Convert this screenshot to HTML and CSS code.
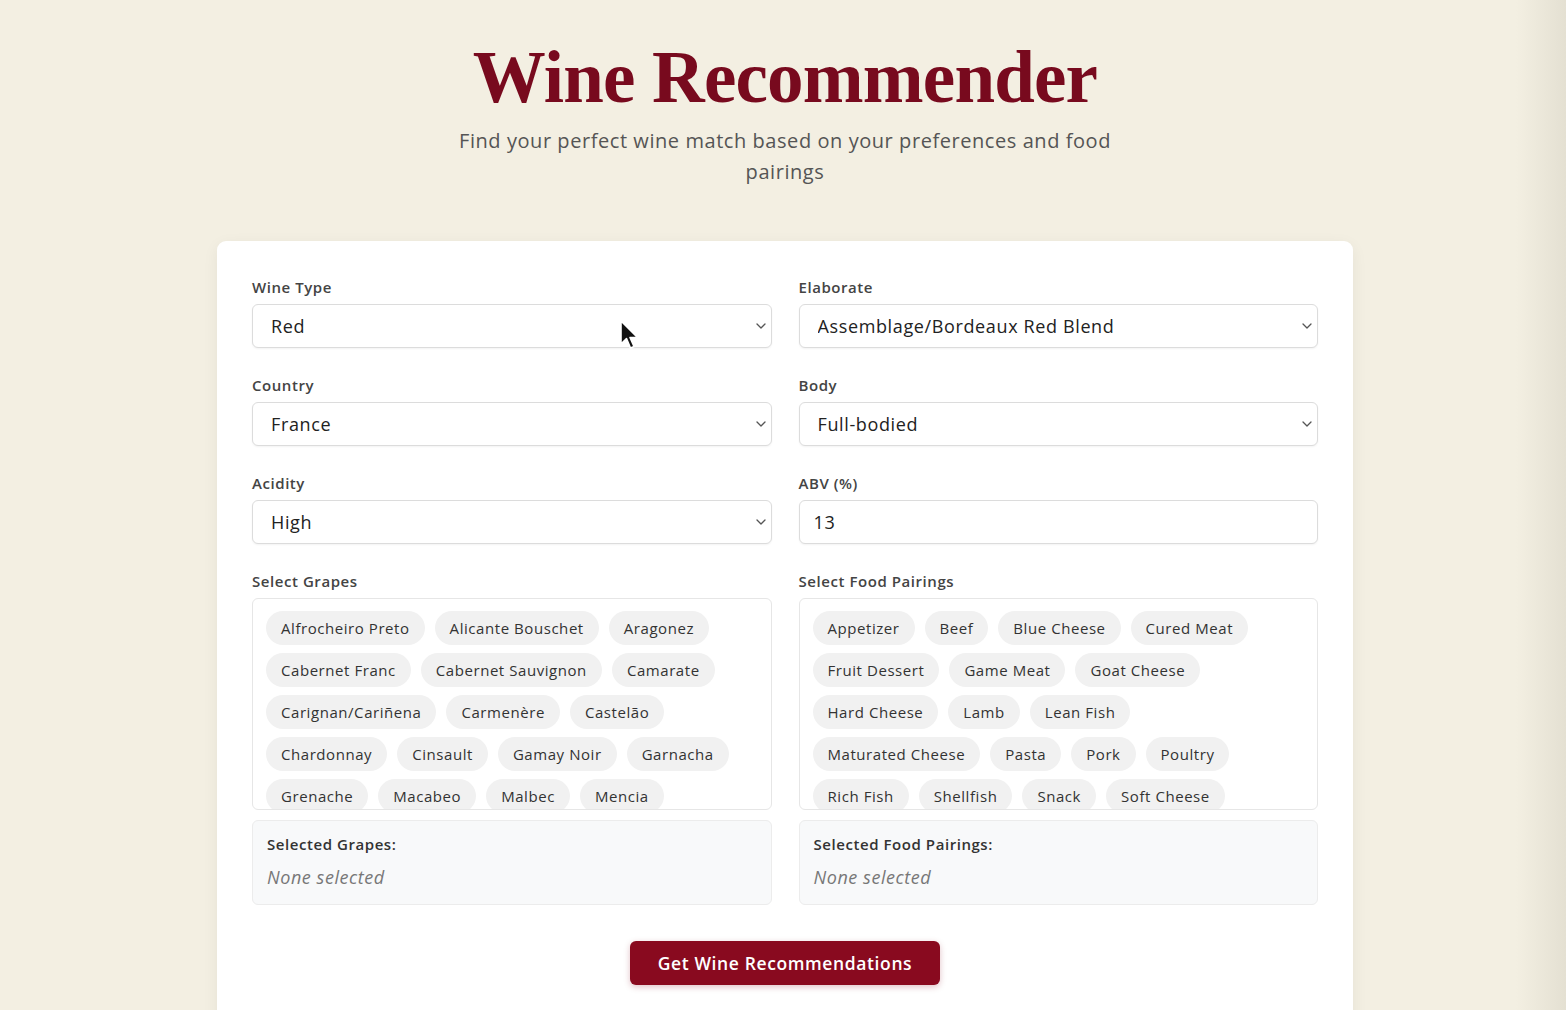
FILE: index.html
```html
<!DOCTYPE html>
<html lang="en">
<head>
<meta charset="utf-8">
<title>Wine Recommender</title>
<link rel="stylesheet" href="styles.css">
</head>
<body>
<div class="page">
  <header class="hero">
    <h1 class="title">Wine Recommender</h1>
    <p class="subtitle">Find your perfect wine match based on your preferences and food pairings</p>
  </header>

  <main class="card">
    <div class="form-grid">
      <div class="group">
        <label class="label">Wine Type</label>
        <select class="control select"><option>Red</option></select>
      </div>
      <div class="group">
        <label class="label">Elaborate</label>
        <select class="control select"><option>Assemblage/Bordeaux Red Blend</option></select>
      </div>
      <div class="group">
        <label class="label">Country</label>
        <select class="control select"><option>France</option></select>
      </div>
      <div class="group">
        <label class="label">Body</label>
        <select class="control select"><option>Full-bodied</option></select>
      </div>
      <div class="group">
        <label class="label">Acidity</label>
        <select class="control select"><option>High</option></select>
      </div>
      <div class="group">
        <label class="label">ABV (%)</label>
        <input class="control input" type="text" value="13">
      </div>

      <div class="group">
        <label class="label">Select Grapes</label>
        <div class="chip-box">
          <span class="chip">Alfrocheiro Preto</span>
          <span class="chip">Alicante Bouschet</span>
          <span class="chip">Aragonez</span>
          <span class="chip">Cabernet Franc</span>
          <span class="chip">Cabernet Sauvignon</span>
          <span class="chip">Camarate</span>
          <span class="chip">Carignan/Cariñena</span>
          <span class="chip">Carmenère</span>
          <span class="chip">Castelão</span>
          <span class="chip">Chardonnay</span>
          <span class="chip">Cinsault</span>
          <span class="chip">Gamay Noir</span>
          <span class="chip">Garnacha</span>
          <span class="chip">Grenache</span>
          <span class="chip">Macabeo</span>
          <span class="chip">Malbec</span>
          <span class="chip">Mencia</span>
        </div>
        <div class="selected">
          <div class="selected-title">Selected Grapes:</div>
          <div class="selected-empty">None selected</div>
        </div>
      </div>

      <div class="group">
        <label class="label">Select Food Pairings</label>
        <div class="chip-box">
          <span class="chip">Appetizer</span>
          <span class="chip">Beef</span>
          <span class="chip">Blue Cheese</span>
          <span class="chip">Cured Meat</span>
          <span class="chip">Fruit Dessert</span>
          <span class="chip">Game Meat</span>
          <span class="chip">Goat Cheese</span>
          <span class="chip">Hard Cheese</span>
          <span class="chip">Lamb</span>
          <span class="chip">Lean Fish</span>
          <span class="chip">Maturated Cheese</span>
          <span class="chip">Pasta</span>
          <span class="chip">Pork</span>
          <span class="chip">Poultry</span>
          <span class="chip">Rich Fish</span>
          <span class="chip">Shellfish</span>
          <span class="chip">Snack</span>
          <span class="chip">Soft Cheese</span>
        </div>
        <div class="selected">
          <div class="selected-title">Selected Food Pairings:</div>
          <div class="selected-empty">None selected</div>
        </div>
      </div>
    </div>

    <div class="actions">
      <button class="btn" type="button">Get Wine Recommendations</button>
    </div>
  </main>
</div>

<svg class="cursor" width="22" height="32" viewBox="0 0 22 32" aria-hidden="true">
  <path d="M2 2 L2 25 L7.5 19.5 L11.5 29 L15 27.5 L11 18.5 L18.5 18.5 Z" fill="#111" stroke="#fff" stroke-width="1.6" stroke-linejoin="round"/>
</svg>
</body>
</html>
```

FILE: styles.css
```css
* { box-sizing: border-box; }

html, body {
  margin: 0;
  padding: 0;
}

body {
  background: linear-gradient(to right, #f3efe2 0, #f3efe2 calc(100% - 50px), #e4e0d2 100%);
  font-family: "Open Sans", "Noto Sans", Arial, sans-serif;
  letter-spacing: 0.035em;
  color: #333;
  height: 1010px;
  overflow: hidden;
}

.page {
  width: 1140px;
  margin: 0 auto;
  padding: 31px 0 0 4px;
}

.hero {
  text-align: center;
}

.title {
  margin: 0;
  font-family: "Liberation Serif", "Times New Roman", serif;
  font-weight: 700;
  font-size: 73px;
  line-height: 94px;
  color: #780a1e;
  letter-spacing: -0.8px;
}

.subtitle {
  margin: 0 auto;
  max-width: 700px;
  font-size: 20px;
  line-height: 31px;
  color: #555;
}

.card {
  margin-top: 54px;
  background: #fff;
  border-radius: 9px;
  box-shadow: 0 4px 16px rgba(0, 0, 0, 0.06);
  padding: 35px 35px 60px;
}

.form-grid {
  display: grid;
  grid-template-columns: 1fr 1fr;
  column-gap: 27px;
  row-gap: 26px;
}

.group {
  display: flex;
  flex-direction: column;
}

.label {
  display: block;
  font-size: 15px;
  line-height: 22px;
  font-weight: 600;
  color: #444;
  margin-bottom: 6px;
}

.control {
  height: 44px;
  width: 100%;
  border: 1px solid #dcdcdc;
  border-radius: 6px;
  background-color: #fff;
  font-family: inherit;
  font-size: 18px;
  letter-spacing: 0.035em;
  color: #222;
  box-shadow: 0 1px 2px rgba(0, 0, 0, 0.05);
}

.select {
  appearance: none;
  -webkit-appearance: none;
  padding: 0 28px 0 18px;
  background-image: url("data:image/svg+xml,%3Csvg xmlns='http://www.w3.org/2000/svg' width='10' height='6' viewBox='0 0 10 6'%3E%3Cpath d='M1 1l4 4 4-4' fill='none' stroke='%23555' stroke-width='1.3' stroke-linecap='round' stroke-linejoin='round'/%3E%3C/svg%3E");
  background-repeat: no-repeat;
  background-position: right 5px center;
  background-size: 10px 6px;
}

.input {
  padding: 0 14px;
}

.chip-box {
  height: 212px;
  overflow: hidden;
  border: 1px solid #e6e6e6;
  border-radius: 6px;
  padding: 12px 13px;
  display: flex;
  flex-wrap: wrap;
  align-content: flex-start;
  gap: 8px 10px;
}

.chip {
  display: inline-block;
  height: 34px;
  line-height: 34px;
  padding: 0 15px;
  background: #f1f1f1;
  border-radius: 17px;
  font-size: 15px;
  color: #333;
  white-space: nowrap;
}

.selected {
  margin-top: 10px;
  height: 85px;
  background: #f8f9fa;
  border: 1px solid #ececec;
  border-radius: 6px;
  padding: 12px 14px;
}

.selected-title {
  font-size: 15px;
  line-height: 22px;
  font-weight: 600;
  color: #333;
}

.selected-empty {
  margin-top: 9px;
  font-size: 18px;
  line-height: 26px;
  font-style: italic;
  color: #777;
}

.actions {
  display: flex;
  justify-content: center;
  margin-top: 36px;
}

.btn {
  width: 310px;
  height: 44px;
  border: none;
  border-radius: 6px;
  background: #890a1f;
  color: #fff;
  font-family: inherit;
  font-size: 17.5px;
  letter-spacing: 0.035em;
  font-weight: 600;
  box-shadow: 0 2px 6px rgba(137, 10, 31, 0.25);
}

.cursor {
  position: absolute;
  left: 619px;
  top: 319px;
}
```
